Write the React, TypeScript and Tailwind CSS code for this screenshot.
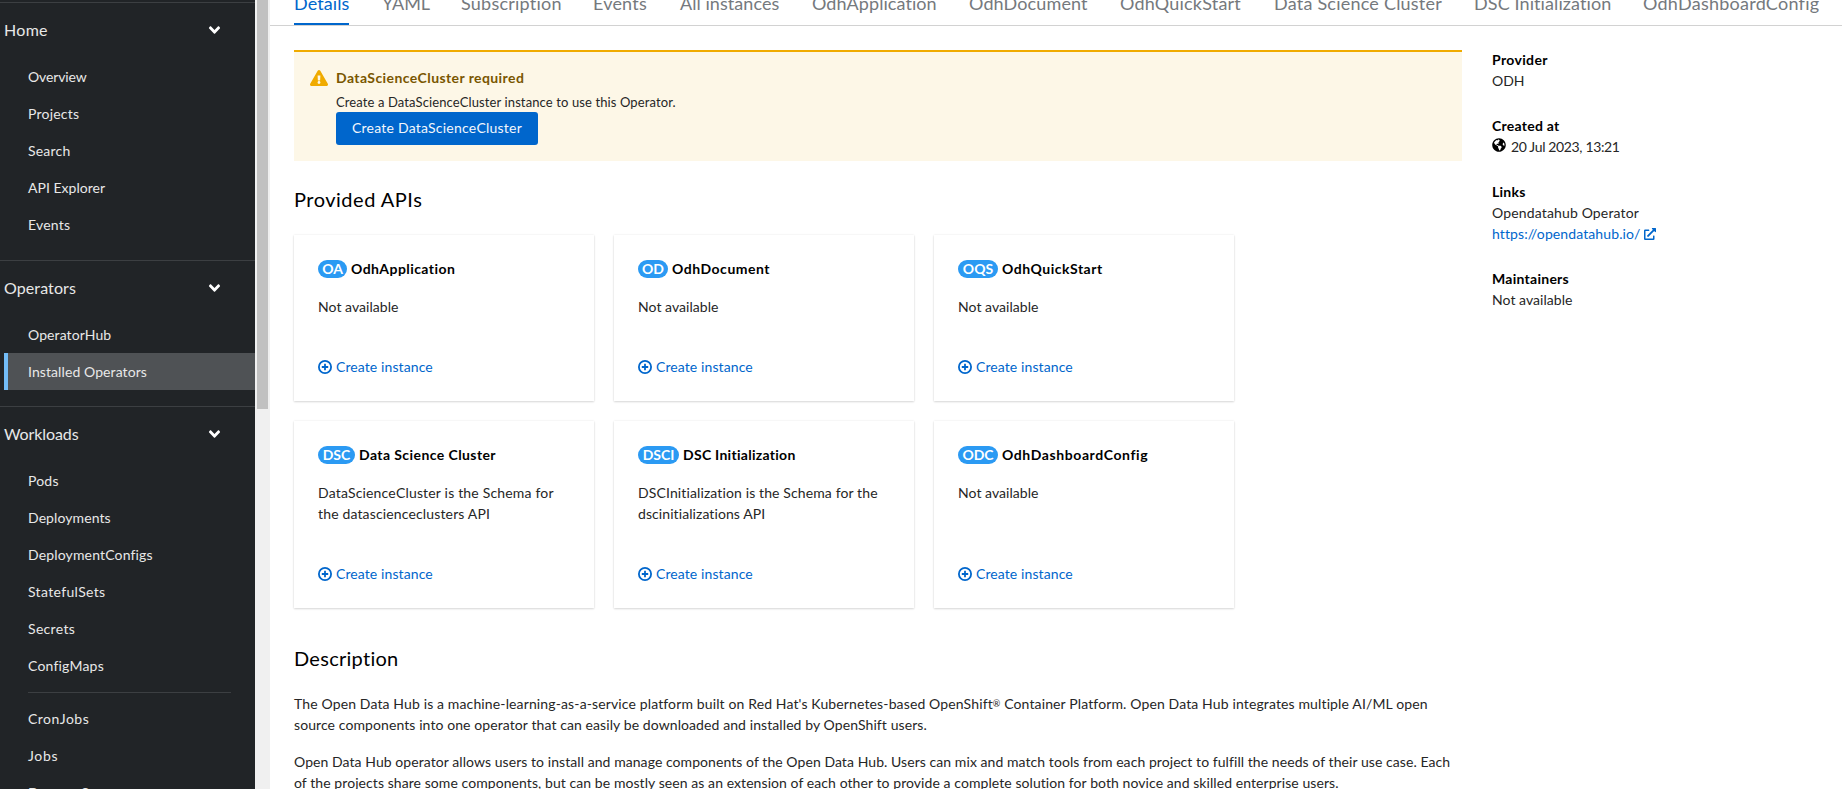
import React from "react";
import { FaAngleDown, FaExclamationTriangle, FaExternalLinkAlt, FaGlobeAmericas } from "react-icons/fa";

type Label = { text: string; cls: string };

const homeItems: Label[] = [
  { text: "Overview", cls: "tracking-[-0.137px]" },
  { text: "Projects", cls: "tracking-[0.22px]" },
  { text: "Search", cls: "tracking-[0.2px]" },
  { text: "API Explorer", cls: "tracking-[0.014px]" },
  { text: "Events", cls: "tracking-[0.2px]" },
];

const operatorItems: Label[] = [
  { text: "OperatorHub", cls: "tracking-[0.09px]" },
  { text: "Installed Operators", cls: "tracking-[0.09px]" },
];

const workloadItems: Label[] = [
  { text: "Pods", cls: "tracking-[0.2px]" },
  { text: "Deployments", cls: "tracking-[0.09px]" },
  { text: "DeploymentConfigs", cls: "tracking-[0.155px]" },
  { text: "StatefulSets", cls: "tracking-[0.342px]" },
  { text: "Secrets", cls: "tracking-[0.33px]" },
  { text: "ConfigMaps", cls: "tracking-[0.2px]" },
];

const jobItems: Label[] = [
  { text: "CronJobs", cls: "tracking-[0.48px]" },
  { text: "Jobs", cls: "tracking-[0.7px]" },
  { text: "DaemonSets", cls: "tracking-[0.2px]" },
];

const tabs: Label[] = [
  { text: "Details", cls: "w-[88px] tracking-[0.1px]" },
  { text: "YAML", cls: "w-[79px] tracking-[0px]" },
  { text: "Subscription", cls: "w-[132px] tracking-[0.227px]" },
  { text: "Events", cls: "w-[87px] tracking-[0.2px]" },
  { text: "All instances", cls: "w-[132px] tracking-[0.06px]" },
  { text: "OdhApplication", cls: "w-[157px] tracking-[0.067px]" },
  { text: "OdhDocument", cls: "w-[151px] tracking-[0.12px]" },
  { text: "OdhQuickStart", cls: "w-[154px] tracking-[0.2px]" },
  { text: "Data Science Cluster", cls: "w-[200px] tracking-[0.221px]" },
  { text: "DSC Initialization", cls: "w-[169px] tracking-[0.1px]" },
  { text: "OdhDashboardConfig", cls: "w-[199px] tracking-[0.253px]" },
];

type Api = {
  abbr: string;
  pill: string;
  name: string;
  cls: string;
  lines: Label[];
};

const notAvailable: Label[] = [{ text: "Not available", cls: "tracking-[0.047px]" }];

const apis: Api[] = [
  { abbr: "OA", pill: "w-[29px]", name: "OdhApplication", cls: "tracking-[0.435px]", lines: notAvailable },
  { abbr: "OD", pill: "w-[30px]", name: "OdhDocument", cls: "tracking-[0.52px]", lines: notAvailable },
  { abbr: "OQS", pill: "w-[40px]", name: "OdhQuickStart", cls: "tracking-[0.52px]", lines: notAvailable },
  {
    abbr: "DSC",
    pill: "w-[37px]",
    name: "Data Science Cluster",
    cls: "tracking-[0.417px]",
    lines: [
      { text: "DataScienceCluster is the Schema for", cls: "tracking-[0.181px]" },
      { text: "the datascienceclusters API", cls: "tracking-[0.151px]" },
    ],
  },
  {
    abbr: "DSCI",
    pill: "w-[41px]",
    name: "DSC Initialization",
    cls: "tracking-[0.28px]",
    lines: [
      { text: "DSCInitialization is the Schema for the", cls: "tracking-[0.12px]" },
      { text: "dscinitializations API", cls: "tracking-[0.08px]" },
    ],
  },
  { abbr: "ODC", pill: "w-[40px]", name: "OdhDashboardConfig", cls: "tracking-[0.598px]", lines: notAvailable },
];

function NavHeader({ text, cls }: Label) {
  return (
    <button className="flex h-[55px] w-full items-center justify-between pb-0.5 pl-1 pr-[34px] text-left text-base text-[#e8e8e8]">
      <span className={cls}>{text}</span>
      <FaAngleDown className="h-[18px] w-[13px] text-white" />
    </button>
  );
}

function NavList({ items, active }: { items: Label[]; active?: string }) {
  return (
    <ul>
      {items.map((item) => (
        <li
          key={item.text}
          className={
            item.text === active
              ? "ml-1 flex h-[37px] items-center whitespace-nowrap border-l-4 border-[#73bcf7] bg-[#4f5255] pl-5"
              : "flex h-[37px] items-center whitespace-nowrap pl-7"
          }
        >
          <span className={item.cls}>{item.text}</span>
        </li>
      ))}
    </ul>
  );
}

function AddCircle() {
  return (
    <svg viewBox="0 0 14 14" className="h-3.5 w-3.5 shrink-0" fill="none" stroke="currentColor">
      <circle cx="7" cy="7" r="6.1" strokeWidth="1.8" />
      <path d="M7 3.8v6.4M3.8 7h6.4" strokeWidth="1.8" />
    </svg>
  );
}

function ApiCard({ api }: { api: Api }) {
  return (
    <article className="flex flex-col bg-white px-6 pb-[24px] pt-[25px] shadow-[0_1px_2px_0_rgba(3,3,3,0.14),0_0_2px_0_rgba(3,3,3,0.08)]">
      <h3 className="flex h-[18px] items-center gap-1 whitespace-nowrap font-bold text-black">
        <span
          className={`${api.pill} flex h-[18px] shrink-0 items-center justify-center rounded-full bg-[#2b9af3] text-[14px] font-bold leading-[18px] text-white`}
        >
          {api.abbr}
        </span>
        <span className={api.cls}>{api.name}</span>
      </h3>
      <div className="mt-[18px] leading-[21px]">
        {api.lines.map((line) => (
          <p key={line.text} className={`${line.cls} whitespace-nowrap`}>
            {line.text}
          </p>
        ))}
      </div>
      <a className="mt-auto flex h-[21px] items-center gap-1 text-[#0066cc]">
        <AddCircle />
        <span className="tracking-[0.1px]">Create instance</span>
      </a>
    </article>
  );
}

export default function App() {
  return (
    <div className="flex h-[789px] w-full overflow-hidden bg-white font-['Lato',sans-serif] text-sm text-[#262626]">
      <nav className="h-full w-[255px] shrink-0 overflow-hidden bg-[#212427] pt-0.5 text-[#e8e8e8]">
        <section className="h-[258px] border-t border-[#3c3f42]">
          <NavHeader text="Home" cls="tracking-[0.3px]" />
          <NavList items={homeItems} />
        </section>
        <section className="h-[146px] border-t border-[#3c3f42]">
          <NavHeader text="Operators" cls="tracking-[0.102px]" />
          <NavList items={operatorItems} active="Installed Operators" />
        </section>
        <section className="border-t border-[#3c3f42]">
          <NavHeader text="Workloads" cls="tracking-[-0.1px]" />
          <NavList items={workloadItems} />
          <hr className="mb-[7px] ml-7 mr-6 mt-2 border-[#3c3f42]" />
          <NavList items={jobItems} />
        </section>
      </nav>
      <div className="h-full w-[15px] shrink-0 bg-[#f0f0f0] px-0.5">
        <div className="h-[409px] w-[11px] bg-[#c1c1c1]" />
      </div>

      <main className="min-w-0 flex-1">
        <div className="flex h-[26px] items-end border-b border-[#d2d2d2] pl-6 text-lg leading-[27px] text-[#75797d]">
          {tabs.map((tab, i) => (
            <div key={tab.text} className={`${tab.cls} shrink-0 whitespace-nowrap`}>
              <span
                className={
                  i === 0
                    ? "block w-[55px] border-b-2 border-[#0066cc] pb-1.5 text-[#0066cc]"
                    : "block pb-2"
                }
              >
                {tab.text}
              </span>
            </div>
          ))}
        </div>

        <div className="flex pl-6 pt-6">
          <div className="w-[1168px] shrink-0">
            <div className="flex h-[111px] gap-2 border-t-2 border-[#f0ab00] bg-[#fdf7e7] pl-4 pt-[15px]">
              <FaExclamationTriangle className="mt-[3px] h-4 w-[18px] shrink-0 text-[#f0ab00]" />
              <div>
                <h4 className="font-bold leading-[21px] tracking-[0.41px] text-[#795600]">DataScienceCluster required</h4>
                <p className="mt-1 text-[13px] leading-[20px] tracking-[0.114px]">
                  Create a DataScienceCluster instance to use this Operator.
                </p>
                <button className="flex h-[33px] w-[202px] items-center justify-center rounded-[3px] bg-[#0066cc] pb-px tracking-[0.231px] text-[#f2f7fc]">
                  Create DataScienceCluster
                </button>
              </div>
            </div>

            <h2 className="mt-[25px] text-xl leading-[26px] tracking-[0.5px] text-black">Provided APIs</h2>
            <div className="mt-[23px] grid w-[940px] grid-cols-3 grid-rows-[166px_187px] gap-5">
              {apis.map((api) => (
                <ApiCard key={api.abbr} api={api} />
              ))}
            </div>

            <h2 className="mt-[37px] text-xl leading-[26px] tracking-[0.28px] text-black">Description</h2>
            <div className="mt-[22px] whitespace-nowrap leading-[21px]">
              <p className="tracking-[0.13px]">
                The Open Data Hub is a machine-learning-as-a-service platform built on Red Hat's Kubernetes-based OpenShift
                <span className="relative -top-0.5 text-[9px] leading-none">®</span> Container Platform. Open Data Hub
                integrates multiple AI/ML open
                <br />
                <span className="tracking-[0.09px]">
                  source components into one operator that can easily be downloaded and installed by OpenShift users.
                </span>
              </p>
              <p className="mt-4 tracking-[0.066px]">
                Open Data Hub operator allows users to install and manage components of the Open Data Hub. Users can mix and match
                tools from each project to fulfill the needs of their use case. Each
                <br />
                <span className="tracking-[0.072px]">
                  of the projects share some components, but can be mostly seen as an extension of each other to provide a
                  complete solution for both novice and skilled enterprise users.
                </span>
              </p>
            </div>
          </div>

          <dl className="-mt-px ml-[30px] whitespace-nowrap leading-[21px]">
            <dt className="font-bold tracking-[0.35px] text-black">Provider</dt>
            <dd>ODH</dd>
            <dt className="mt-6 font-bold tracking-[0.263px] text-black">Created at</dt>
            <dd className="flex gap-[5px]">
              <FaGlobeAmericas className="mt-[2px] h-[14px] w-[14px] text-black" />
              <span className="tracking-[-0.359px]">20 Jul 2023, 13:21</span>
            </dd>
            <dt className="mt-6 font-bold tracking-[0.263px] text-black">Links</dt>
            <dd className="tracking-[0.149px]">Opendatahub Operator</dd>
            <dd className="flex items-center gap-1 text-[#0066cc]">
              <span className="tracking-[0.103px]">https://opendatahub.io/</span>
              <FaExternalLinkAlt className="h-3 w-3" />
            </dd>
            <dt className="mt-6 font-bold tracking-[0.263px] text-black">Maintainers</dt>
            <dd className="tracking-[0.047px]">Not available</dd>
          </dl>
        </div>
      </main>
    </div>
  );
}
